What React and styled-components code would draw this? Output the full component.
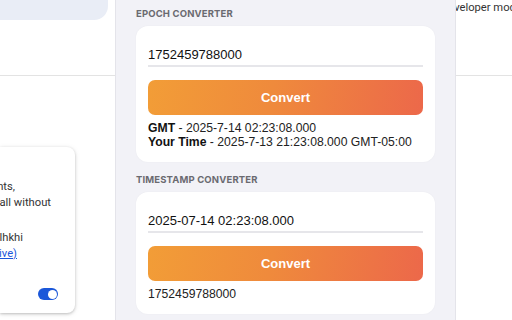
import React from 'react'
import styled, { createGlobalStyle } from 'styled-components'

const GlobalStyle = createGlobalStyle`
  html, body {
    margin: 0;
    padding: 0;
    background: #ffffff;
    overflow: hidden;
  }
  body {
    width: 512px;
    height: 320px;
    font-family: "Liberation Sans", Arial, sans-serif;
  }
`

const Page = styled.div`
  display: flex;
  width: 512px;
  height: 320px;
  overflow: hidden;
`

// background page, left of the popup
const LeftPane = styled.div`
  width: 115px;
  flex-shrink: 0;
  display: flex;
  flex-direction: column;
`

const TopBar = styled.div`
  width: 108px;
  height: 20px;
  flex-shrink: 0;
  background: #e9edf6;
  border-bottom-right-radius: 14px;
`

const Divider = styled.div`
  height: 1px;
  flex-shrink: 0;
  background: #e3e3e3;
  margin-top: ${p => p.$top}px;
`

const ExtCard = styled.div`
  margin-top: 71px;
  width: 75px;
  height: 166px;
  flex-shrink: 0;
  background: #fff;
  border-radius: 0 8px 8px 0;
  box-shadow: 0 1px 3px rgba(0, 0, 0, 0.22), 0 1px 6px rgba(0, 0, 0, 0.08);
  display: flex;
  flex-direction: column;
  align-items: flex-end;
  padding: 32px 0 13px;
  box-sizing: border-box;
  font-family: Roboto, "Liberation Sans", sans-serif;
  font-size: 11.2px;
  color: #333;
`

const Line = styled.div`
  white-space: nowrap;
  line-height: 16px;
  margin-right: ${p => p.$right}px;
  margin-top: ${p => p.$gap || 0}px;
`

const Link = styled.span`
  color: #1a56db;
  text-decoration: underline;
`

const Toggle = styled.div`
  margin-top: auto;
  margin-right: 17px;
  width: 20px;
  height: 12px;
  flex-shrink: 0;
  border-radius: 6px;
  background: #1b57d9;
  display: flex;
  align-items: center;
  justify-content: flex-end;
  padding: 0 1.5px;
  box-sizing: border-box;
`

const Knob = styled.span`
  display: block;
  width: 9px;
  height: 9px;
  border-radius: 50%;
  background: #fff;
`

// the extension popup
const Popup = styled.div`
  width: 341px;
  flex-shrink: 0;
  background: #f2f2f7;
  border-left: 1px solid #e4e4ea;
  border-right: 1px solid #e4e4ea;
  box-sizing: border-box;
  padding: 7px 20px 0;
  display: flex;
  flex-direction: column;
`

const Section = styled.section`
  display: flex;
  flex-direction: column;
  margin-top: ${p => p.$top || 0}px;
`

const Label = styled.div`
  font-family: Inter, "Liberation Sans", sans-serif;
  font-size: 9.5px;
  font-weight: 700;
  letter-spacing: 0.15px;
  line-height: 14px;
  color: #6a6a70;
  margin-bottom: 5px;
`

const Card = styled.div`
  background: #fff;
  border-radius: 12px;
  padding: 18px 12px 13px;
  display: flex;
  flex-direction: column;
  box-shadow: 0 0 2px rgba(0, 0, 0, 0.04);
`

const Input = styled.input`
  border: none;
  border-bottom: 2px solid #e6e6ea;
  outline: none;
  background: transparent;
  padding: 0;
  height: 21px;
  font-family: "Liberation Sans", Arial, sans-serif;
  font-size: 13px;
  color: #111;
`

const ConvertButton = styled.button`
  margin-top: 13px;
  height: 35px;
  border: none;
  border-radius: 7px;
  background: linear-gradient(100deg, #f29d37 0%, #ef8a3c 45%, #ec684a 100%);
  color: #fff;
  font-family: "Liberation Sans", Arial, sans-serif;
  font-size: 13px;
  font-weight: 700;
`

const Results = styled.div`
  margin-top: 6px;
  font-size: 12.2px;
  line-height: 14px;
  color: #222;
`

const Key = styled.b`
  color: #111;
`

const RightPane = styled.div`
  flex: 1;
  min-width: 0;
  overflow: hidden;
  display: flex;
  flex-direction: column;
  padding-top: 1px;
  font-family: Roboto, "Liberation Sans", sans-serif;
  font-size: 11.2px;
  color: #333;
`

const Clipped = styled.div`
  white-space: nowrap;
  margin-left: -15px;
  line-height: 14px;
`

export default function App() {
  return (
    <Page>
      <GlobalStyle />
      <LeftPane>
        <TopBar />
        <Divider $top={55} />
        <ExtCard>
          <Line $right={60}>contents,</Line>
          <Line $right={24}>all without</Line>
          <Line $right={52} $gap={19}>lhkhi</Line>
          <Line $right={58}><Link>(Inactive)</Link></Line>
          <Toggle><Knob /></Toggle>
        </ExtCard>
      </LeftPane>

      <Popup>
        <Section>
          <Label>EPOCH CONVERTER</Label>
          <Card>
            <Input defaultValue="1752459788000" />
            <ConvertButton>Convert</ConvertButton>
            <Results>
              <div><Key>GMT</Key> - 2025-7-14 02:23:08.000</div>
              <div><Key>Your Time</Key> - 2025-7-13 21:23:08.000 GMT-05:00</div>
            </Results>
          </Card>
        </Section>
        <Section $top={11}>
          <Label>TIMESTAMP CONVERTER</Label>
          <Card>
            <Input defaultValue="2025-07-14 02:23:08.000" />
            <ConvertButton>Convert</ConvertButton>
            <Results>1752459788000</Results>
          </Card>
        </Section>
      </Popup>

      <RightPane>
        <Clipped>Developer mode</Clipped>
        <Divider $top={60} />
      </RightPane>
    </Page>
  )
}
